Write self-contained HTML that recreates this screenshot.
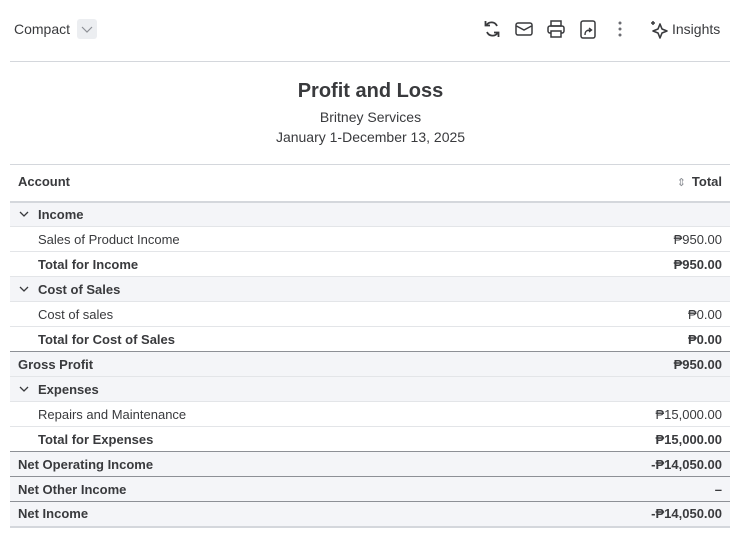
<!DOCTYPE html>
<html><head><meta charset="utf-8"><style>
*{box-sizing:border-box;margin:0;padding:0}
body{width:741px;height:541px;background:#fff;font-family:"Liberation Sans",Arial,sans-serif;color:#393a3d;position:relative;overflow:hidden}
.top{position:absolute;left:14px;top:21px;font-size:14px;color:#393a3d}
.dd{position:absolute;left:77px;top:19px;width:20px;height:20px;background:#eceef1;border-radius:3px}
.icons{position:absolute;top:18px}
.ins{position:absolute;left:672px;top:21px;font-size:14px;color:#393a3d}
.hr{position:absolute;left:10px;top:61px;width:720px;height:1px;background:#d4d7dc}
.title{position:absolute;left:0;width:741px;text-align:center}
table{position:absolute;left:10px;top:164px;width:720px;border-collapse:collapse;font-size:13px}
td{height:25px;padding:0 8px;border-bottom:1px solid #e3e5e8;white-space:nowrap}
td.r{text-align:right}
tr.h td{height:37px;padding-bottom:3px;border-top:1px solid #d4d7dc;border-bottom:2px solid #d4d7dc;font-weight:bold}
tr.g td{background:#f4f5f8}
tr.b td{font-weight:bold}
tr.d td{border-bottom:1px solid #8d9096}
tr.last td{border-bottom:2px solid #d4d7dc}
.i{padding-left:28px}
.chev{display:inline-block;width:12px;margin-right:8px}
</style></head><body>
<div class="top">Compact</div>
<div class="dd"><svg width="20" height="20"><path d="M5 8l5 5 5-5" fill="none" stroke="#8d9096" stroke-width="1.2"/></svg></div>
<svg class="icons" style="left:482px" width="20" height="22" viewBox="0 0 20 22"><path d="M15 8a6 6 0 0 0-10.5-1M5 14a6 6 0 0 0 10.5 1" fill="none" stroke="#393a3d" stroke-width="1.8"/><path d="M3.5 3v4.5h4.5M16.5 19v-4.5h-4.5" fill="none" stroke="#393a3d" stroke-width="1.8"/></svg>
<svg class="icons" style="left:514px" width="20" height="22" viewBox="0 0 20 22"><rect x="2" y="5" width="16" height="12" rx="2" fill="none" stroke="#393a3d" stroke-width="1.5"/><path d="M2.5 8l7.5 4 7.5-4" fill="none" stroke="#393a3d" stroke-width="1.5"/></svg>
<svg class="icons" style="left:546px" width="20" height="22" viewBox="0 0 20 22"><rect x="5" y="3" width="10" height="5" fill="none" stroke="#393a3d" stroke-width="1.5"/><rect x="2" y="8" width="16" height="7" rx="2" fill="none" stroke="#393a3d" stroke-width="1.5"/><rect x="5" y="13" width="10" height="6" fill="#fff" stroke="#393a3d" stroke-width="1.5"/></svg>
<svg class="icons" style="left:578px" width="20" height="22" viewBox="0 0 20 22"><rect x="3" y="3" width="14" height="17" rx="2" fill="none" stroke="#393a3d" stroke-width="1.5"/><path d="M7 17c0-4 2-5 6-5M11 10l2.5 2-2.5 2" fill="none" stroke="#393a3d" stroke-width="1.4"/></svg>
<svg class="icons" style="left:610px" width="20" height="22" viewBox="0 0 20 22"><circle cx="10" cy="5" r="1.5" fill="#6b6c72"/><circle cx="10" cy="11" r="1.5" fill="#6b6c72"/><circle cx="10" cy="17" r="1.5" fill="#6b6c72"/></svg>
<svg class="icons" style="left:648px" width="22" height="22" viewBox="0 0 22 22"><path d="M12 6l2 5 5 2-5 2-2 5-2-5-5-2 5-2z" fill="none" stroke="#393a3d" stroke-width="1.6" stroke-linejoin="round"/><path d="M5 3v4M3 5h4" stroke="#393a3d" stroke-width="1.5"/></svg>
<div class="ins">Insights</div>
<div class="hr"></div>
<div class="title" style="top:80px;font-size:20px;font-weight:bold;color:#393a3d">Profit and Loss</div>
<div class="title" style="top:109px;font-size:14px">Britney Services</div>
<div class="title" style="top:129px;font-size:14px">January 1-December 13, 2025</div>
<table>
<tr class="h"><td>Account</td><td class="r"><span style="color:#8d9096;font-weight:normal;font-size:11px;margin-right:6px">⇕</span>Total</td></tr>
<tr class="g b"><td><span class="chev"><svg width="12" height="10"><path d="M2 3l4 4 4-4" fill="none" stroke="#393a3d" stroke-width="1.3"/></svg></span>Income</td><td></td></tr>
<tr><td class="i">Sales of Product Income</td><td class="r">₱950.00</td></tr>
<tr class="b"><td class="i">Total for Income</td><td class="r">₱950.00</td></tr>
<tr class="g b"><td><span class="chev"><svg width="12" height="10"><path d="M2 3l4 4 4-4" fill="none" stroke="#393a3d" stroke-width="1.3"/></svg></span>Cost of Sales</td><td></td></tr>
<tr><td class="i">Cost of sales</td><td class="r">₱0.00</td></tr>
<tr class="b d"><td class="i">Total for Cost of Sales</td><td class="r">₱0.00</td></tr>
<tr class="g b"><td>Gross Profit</td><td class="r">₱950.00</td></tr>
<tr class="g b"><td><span class="chev"><svg width="12" height="10"><path d="M2 3l4 4 4-4" fill="none" stroke="#393a3d" stroke-width="1.3"/></svg></span>Expenses</td><td></td></tr>
<tr><td class="i">Repairs and Maintenance</td><td class="r">₱15,000.00</td></tr>
<tr class="b d"><td class="i">Total for Expenses</td><td class="r">₱15,000.00</td></tr>
<tr class="g b d"><td>Net Operating Income</td><td class="r">-₱14,050.00</td></tr>
<tr class="g b d"><td>Net Other Income</td><td class="r">–</td></tr>
<tr class="g b last"><td>Net Income</td><td class="r">-₱14,050.00</td></tr>
</table>
</body></html>
